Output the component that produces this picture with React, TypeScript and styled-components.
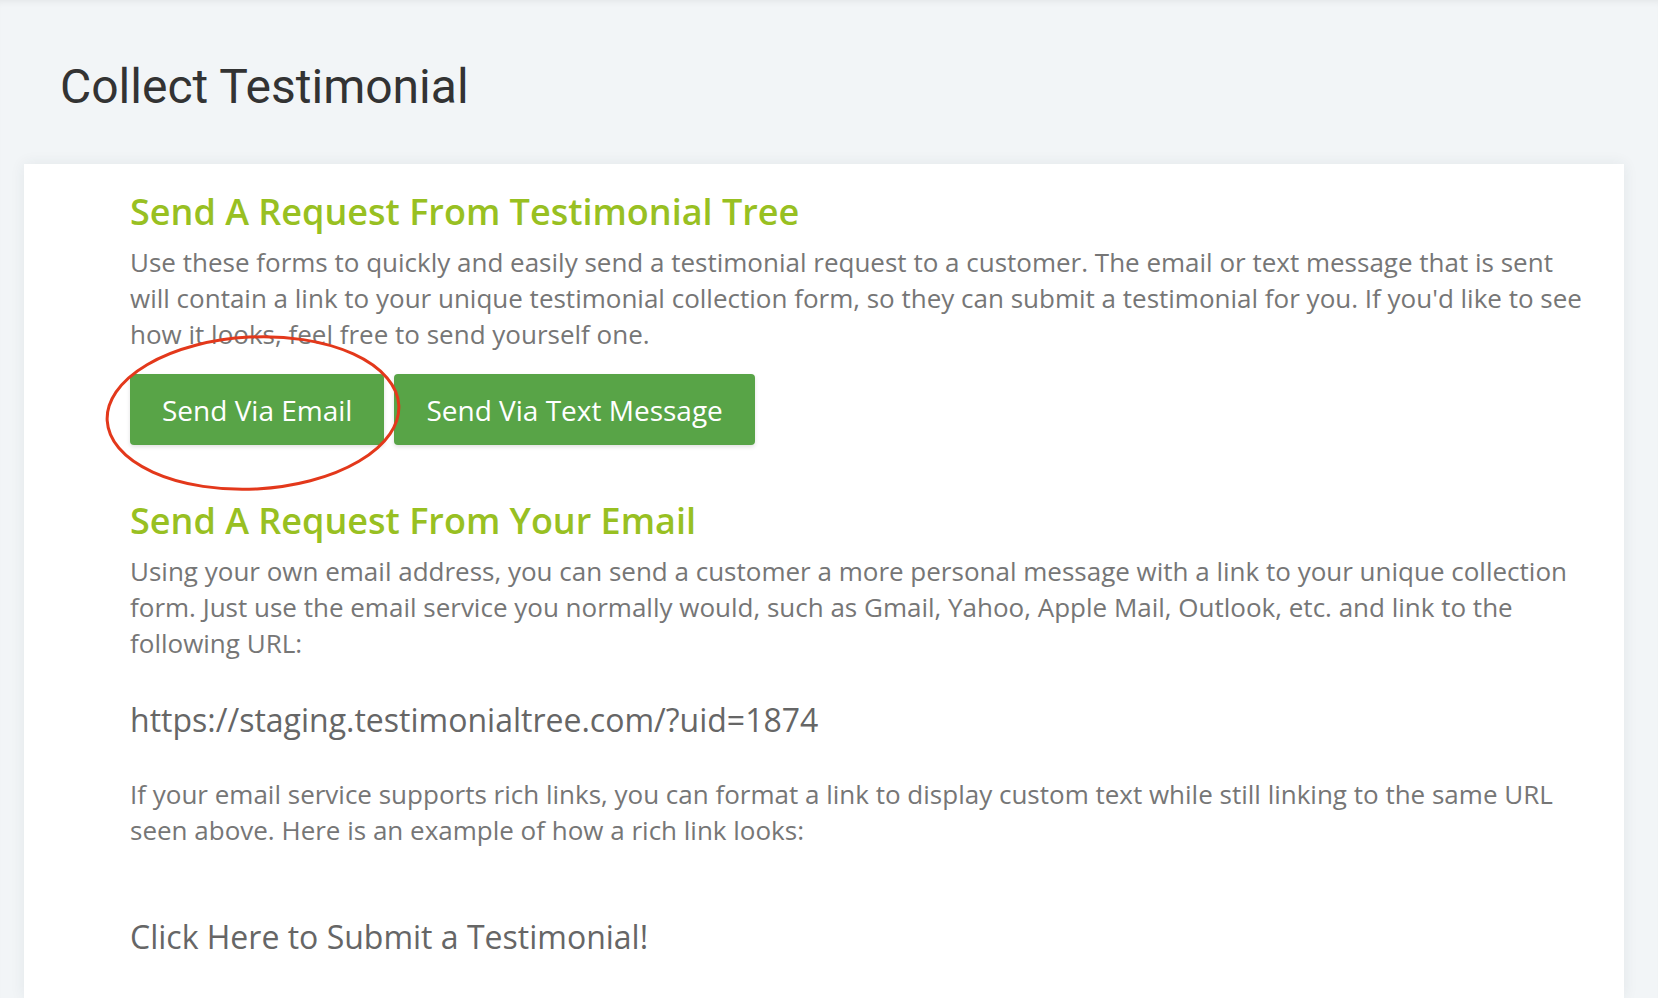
import React from "react";
import styled, { createGlobalStyle } from "styled-components";

const GlobalStyle = createGlobalStyle`
  html, body {
    margin: 0;
    padding: 0;
    background: #f2f5f7;
    height: 100%;
    overflow: hidden;
  }
  * { box-sizing: border-box; }
`;

const Page = styled.div`
  position: relative;
  height: 998px;
  overflow: hidden;
  background: #f2f5f7;
  box-shadow: inset 0 6px 6px -4px rgba(0, 0, 0, 0.06);
  padding: 57px 34px 0 24px;
`;

const PageTitle = styled.h1`
  margin: 0 0 47px 36px;
  font-family: Roboto, "Liberation Sans", sans-serif;
  font-weight: 400;
  font-size: 48px;
  line-height: 60px;
  color: #333333;
`;

const Card = styled.section`
  background: #ffffff;
  box-shadow: 0 0 14px rgba(40, 60, 80, 0.08);
  padding: 23px 40px 20px 106px;
  min-height: 834px;
`;

const Heading = styled.h2`
  margin: 0 0 7px;
  font-family: "Open Sans", "Liberation Sans", sans-serif;
  font-weight: 600;
  font-size: 36px;
  line-height: 50px;
  color: #98c022;
`;

const Paragraph = styled.p`
  margin: 0;
  font-family: "Open Sans", "Liberation Sans", sans-serif;
  font-size: 26px;
  line-height: 36px;
  color: #767676;
`;

const ButtonRow = styled.div`
  position: relative;
  display: flex;
  gap: 10px;
  margin: 22px 0 51px;
`;

const Button = styled.button`
  height: 71px;
  padding: 0 32px;
  border: none;
  border-radius: 4px;
  background: #58a447;
  color: #ffffff;
  font-family: "Open Sans", "Liberation Sans", sans-serif;
  font-size: 28px;
  cursor: pointer;
  box-shadow: 0 2px 4px rgba(0, 0, 0, 0.12);
`;

const Annotation = styled.svg`
  position: absolute;
  left: -26px;
  top: -39px;
  width: 298px;
  height: 156px;
  pointer-events: none;
  overflow: visible;
`;

const Url = styled.div`
  margin: 37px 0 34px;
  font-family: "Open Sans", "Liberation Sans", sans-serif;
  font-size: 32px;
  line-height: 44px;
  color: #666666;
`;

const RichLink = styled.a`
  display: block;
  margin-top: 67px;
  font-family: "Open Sans", "Liberation Sans", sans-serif;
  font-size: 32px;
  line-height: 44px;
  color: #666666;
  text-decoration: none;
`;

export default function App() {
  return (
    <>
      <GlobalStyle />
      <Page>
        <PageTitle>Collect Testimonial</PageTitle>
        <Card>
          <Heading>Send A Request From Testimonial Tree</Heading>
          <Paragraph>
            Use these forms to quickly and easily send a testimonial request to a customer. The email or text
            message that is sent will contain a link to your unique testimonial collection form, so they can
            submit a testimonial for you. If you'd like to see how it looks, feel free to send yourself one.
          </Paragraph>
          <ButtonRow>
            <Button>Send Via Email</Button>
            <Button>Send Via Text Message</Button>
            <Annotation viewBox="0 0 298 156">
              <ellipse
                cx="149"
                cy="78"
                rx="146"
                ry="76"
                fill="none"
                stroke="#e3381b"
                strokeWidth="3"
                transform="rotate(-3 149 78)"
              />
            </Annotation>
          </ButtonRow>
          <Heading>Send A Request From Your Email</Heading>
          <Paragraph>
            Using your own email address, you can send a customer a more personal message with a link to your
            unique collection form. Just use the email service you normally would, such as Gmail, Yahoo, Apple
            Mail, Outlook, etc. and link to the following URL:
          </Paragraph>
          <Url>https://staging.testimonialtree.com/?uid=1874</Url>
          <Paragraph>
            If your email service supports rich links, you can format a link to display custom text while still
            linking to the same URL seen above. Here is an example of how a rich link looks:
          </Paragraph>
          <RichLink href="#">Click Here to Submit a Testimonial!</RichLink>
        </Card>
      </Page>
    </>
  );
}
